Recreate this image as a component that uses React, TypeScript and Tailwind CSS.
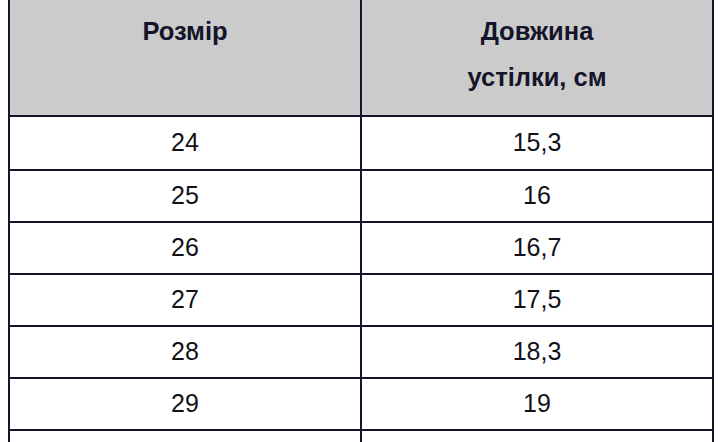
const rows = [
  ['24', '15,3'],
  ['25', '16'],
  ['26', '16,7'],
  ['27', '17,5'],
  ['28', '18,3'],
  ['29', '19'],
  ['', ''],
];

export default function App() {
  return (
    <div
      className="h-[442px] w-[720px] overflow-hidden bg-white text-[#111118]"
      style={{ fontFamily: '"Liberation Sans", Arial, sans-serif' }}
    >
      <div className="ml-[8px] w-[706px] border-x-2 border-[#14142a]">
        {/* header */}
        <div className="flex h-[117px] border-b-2 border-[#14142a] bg-[#cbcbcb] text-[25.5px] font-bold leading-[46px] text-[#14142a]">
          <div className="w-[350px] pt-[8px] text-center">Розмір</div>
          <div className="w-[2px] bg-[#14142a]" />
          <div className="flex-1 pt-[8px] text-center">
            Довжина
            <br />
            устілки, см
          </div>
        </div>
        {rows.map(([size, length], i) => (
          <div
            key={i}
            className={`flex border-b-2 border-[#14142a] text-[25px] ${i === 0 ? 'h-[54px]' : 'h-[52px]'}`}
          >
            <div className="flex w-[350px] items-center justify-center">{size}</div>
            <div className="w-[2px] bg-[#14142a]" />
            <div className="flex flex-1 items-center justify-center">{length}</div>
          </div>
        ))}
      </div>
    </div>
  );
}
